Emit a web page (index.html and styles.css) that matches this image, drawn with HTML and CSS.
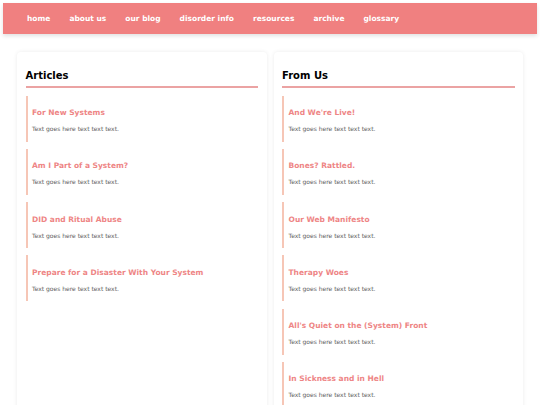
FILE: index.html
```html
<!DOCTYPE html>
<html>
<head>
<meta charset="utf-8">
<link rel="stylesheet" href="styles.css">
</head>
<body>
<nav class="topnav">
  <a href="#">home</a>
  <a href="#">about us</a>
  <a href="#">our blog</a>
  <a href="#">disorder info</a>
  <a href="#">resources</a>
  <a href="#">archive</a>
  <a href="#">glossary</a>
</nav>
<main class="columns">
  <section class="card">
    <h2 class="card-title">Articles</h2>
    <div class="post"><h3>For New Systems</h3><p>Text goes here text text text.</p></div>
    <div class="post"><h3>Am I Part of a System?</h3><p>Text goes here text text text.</p></div>
    <div class="post"><h3>DID and Ritual Abuse</h3><p>Text goes here text text text.</p></div>
    <div class="post"><h3>Prepare for a Disaster With Your System</h3><p>Text goes here text text text.</p></div>
  </section>
  <section class="card">
    <h2 class="card-title">From Us</h2>
    <div class="post"><h3>And We're Live!</h3><p>Text goes here text text text.</p></div>
    <div class="post"><h3>Bones? Rattled.</h3><p>Text goes here text text text.</p></div>
    <div class="post"><h3>Our Web Manifesto</h3><p>Text goes here text text text.</p></div>
    <div class="post"><h3>Therapy Woes</h3><p>Text goes here text text text.</p></div>
    <div class="post"><h3>All's Quiet on the (System) Front</h3><p>Text goes here text text text.</p></div>
    <div class="post"><h3>In Sickness and in Hell</h3><p>Text goes here text text text.</p></div>
  </section>
</main>
</body>
</html>
```
FILE: styles.css
```css
html, body {
  margin: 0;
  padding: 0;
  background: #ffffff;
  font-family: "DejaVu Sans", Verdana, sans-serif;
}
body {
  padding: 3px 3px 0 3px;
}
.topnav {
  display: flex;
  align-items: center;
  height: 31px;
  padding: 0 14.5px;
  background: #f08080;
  box-shadow: 0 2px 4px rgba(0, 0, 0, 0.12);
}
.topnav a {
  color: #ffffff;
  text-decoration: none;
  font-weight: bold;
  font-size: 7.5px;
  padding: 0 9.5px;
}
.columns {
  display: flex;
  align-items: flex-start;
  gap: 7px;
  margin: 18px 14px 0 14px;
}
.card {
  flex: 1;
  background: #ffffff;
  border-radius: 4px;
  box-shadow: 0 0 4px rgba(0, 0, 0, 0.08);
  padding: 18px 8.5px 40px 8.5px;
  min-height: 400px;
}
.card-title {
  margin: 0 0 7.5px 0;
  font-size: 10px;
  line-height: 12px;
  font-weight: bold;
  color: #000000;
  padding-bottom: 4px;
  border-bottom: 2px solid #eba3a3;
}
.post {
  border-left: 2px solid #f6c6b6;
  padding: 12.5px 0 8.5px 4.5px;
  margin-bottom: 7.3px;
}
.post h3 {
  margin: 0 0 7px 0;
  font-size: 7.5px;
  line-height: 10px;
  font-weight: bold;
  color: #ee8585;
}
.post p {
  margin: 0;
  font-size: 6px;
  line-height: 8px;
  color: #606060;
}
```
